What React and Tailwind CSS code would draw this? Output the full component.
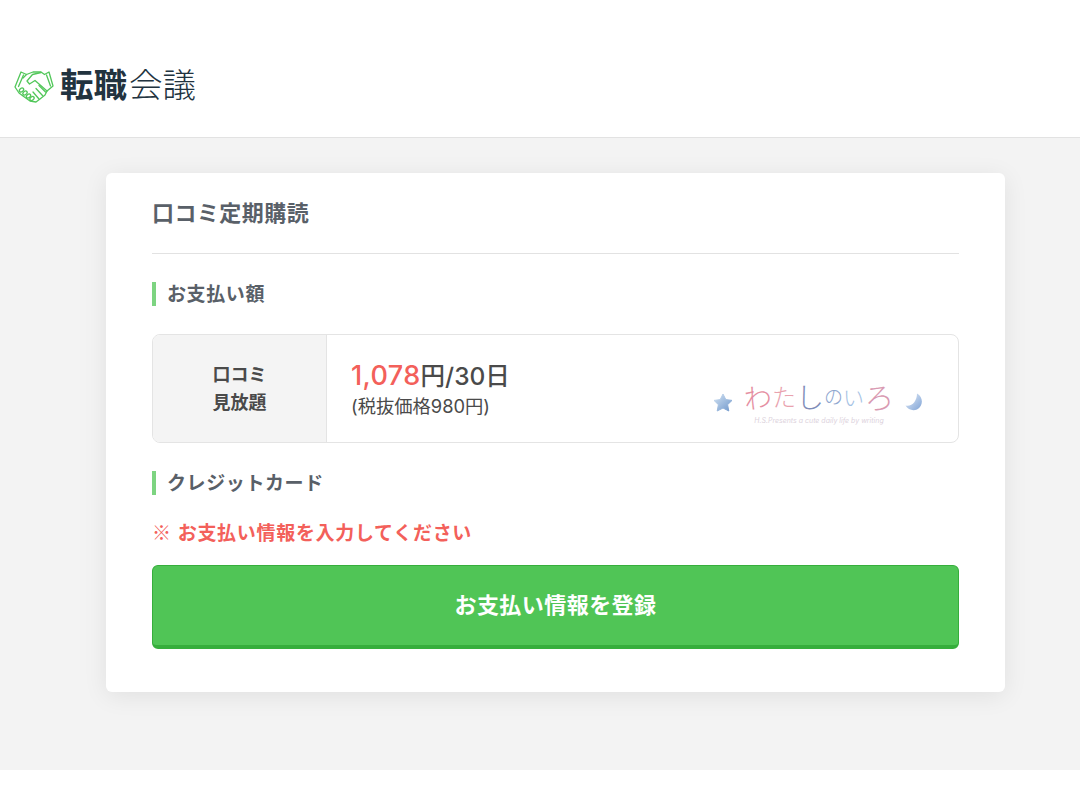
import React from 'react';

const HandshakeLogo = () => (
  <svg width="40" height="34" viewBox="0 0 40 34" fill="none" stroke="#52c75a" strokeWidth="1.3" strokeLinejoin="round" strokeLinecap="round">
    {/* outer silhouette */}
    <path d="M1 18 L7 3 L12.5 5.5 L19 3 L27 3 L30.5 5.5 L35 3 L39 17 L33 22 L31 26 L26 30 L22 33 L16 32 L9 27 L5 24 Z" />
    {/* cuffs */}
    <path d="M9.5 6 L4.5 17.5" />
    <path d="M32.5 6 L36.5 17" />
    {/* thumb and upper hand */}
    <path d="M27 3.5 L18.5 5.5 L13 12 L15.5 15 L21 11.5 L33 22" />
    <path d="M12.5 5.5 L9 9" />
    {/* fingers */}
    <path d="M25 16.5 L31.5 23" />
    <path d="M22 19.5 L28.5 26.5" />
    <path d="M19 23 L25 30" />
    {/* knuckles */}
    <ellipse cx="7.5" cy="21" rx="2.4" ry="1.7" transform="rotate(-40 7.5 21)" />
    <ellipse cx="11" cy="24" rx="2.4" ry="1.7" transform="rotate(-40 11 24)" />
    <ellipse cx="14.5" cy="27" rx="2.4" ry="1.7" transform="rotate(-40 14.5 27)" />
    <ellipse cx="18" cy="29.5" rx="2.4" ry="1.7" transform="rotate(-40 18 29.5)" />
  </svg>
);

const Star = () => (
  <svg width="20" height="19" viewBox="0 0 20 19">
    <defs>
      <linearGradient id="starFill" x1="0" y1="0" x2="1" y2="1">
        <stop offset="0" stopColor="#d3e3f3" />
        <stop offset="1" stopColor="#6f97cb" />
      </linearGradient>
    </defs>
    <path d="M10 1 L12.8 6.6 L19 7.4 L14.6 11.7 L15.8 18 L10 15 L4.2 18 L5.4 11.7 L1 7.4 L7.2 6.6 Z" fill="url(#starFill)" stroke="url(#starFill)" strokeLinejoin="round" strokeWidth="1" />
  </svg>
);

const Moon = () => (
  <svg width="18" height="18" viewBox="0 0 18 18">
    <defs>
      <linearGradient id="moonFill" x1="0" y1="0" x2="1" y2="1">
        <stop offset="0" stopColor="#e8f0f9" />
        <stop offset="1" stopColor="#7fa3d6" />
      </linearGradient>
    </defs>
    <path d="M12 0.5 C18.5 4 18.5 13 12 16.5 C8 18 3 17 0.5 12.5 C7 14 12 8 12 0.5 Z" fill="url(#moonFill)" />
  </svg>
);

const SectionHeading = ({ children }) => (
  <h3 className="h-6 border-l-4 border-[#7dd481] pl-[11px] text-[19px] leading-[26px] font-bold tracking-[0.6px] text-[#596068]">
    {children}
  </h3>
);

export default function App() {
  return (
    <div className="min-h-[810px] bg-white font-['Liberation_Sans','Noto_Sans_CJK_JP',sans-serif]">
      {/* ヘッダー */}
      <header className="flex h-[138px] items-center gap-[6px] border-b border-[#e2e2e2] bg-white pt-[34px] pl-[14px]">
        <HandshakeLogo />
        <div className="flex items-center text-[33.5px] leading-none text-[#22333f]">
          <span className="font-bold">転職</span>
          <span className="ml-[2px] font-light">会議</span>
        </div>
      </header>

      <main className="h-[632px] bg-[#f3f3f3] pt-[35px] pl-[106px]">
        <div className="h-[519px] w-[899px] rounded-md bg-white px-[46px] shadow-[0_4px_24px_rgba(0,0,0,0.08)]">
          <h2 className="flex h-[81px] items-center border-b border-[#e2e2e2] text-[22px] font-bold tracking-[0.45px] text-[#596068]">
            口コミ定期購読
          </h2>

          <div className="mt-[28px]">
            <SectionHeading>お支払い額</SectionHeading>
          </div>

          {/* 料金 */}
          <div className="mt-[28px] flex h-[109px] overflow-hidden rounded-lg border border-[#e4e4e4]">
            <div className="flex w-[174px] items-center justify-center border-r border-[#e4e4e4] bg-[#f4f4f4] text-center text-[18px] leading-[28px] font-bold text-[#4a4a4a]">
              <p>口コミ<br />見放題</p>
            </div>
            <div className="flex flex-1 items-center justify-between pr-[35px] pl-[24px] font-['Inter','Noto_Sans_CJK_JP',sans-serif]">
              <div className="text-[#4a4a4a]">
                <p className="text-[24.5px] leading-[33px] font-medium">
                  <span className="text-[27px] tracking-[0.4px] text-[#f3605a]">1,078</span>円/30日
                </p>
                <p className="text-[18.3px] leading-[26px]">(税抜価格980円)</p>
              </div>
              <div className="flex items-center gap-[9px] pt-[27px]">
                <Star />
                <div className="flex w-[154px] flex-col items-center">
                  <p className="flex h-[36px] items-center font-extralight">
                    <span className="-rotate-6 text-[28px] leading-none text-[#e58fa2]">わ</span>
                    <span className="text-[24px] leading-none text-[#e9a2ae]">た</span>
                    <span className="text-[28px] leading-none text-[#7f8db8]">し</span>
                    <span className="text-[19px] leading-none text-[#8ea6cf]">の</span>
                    <span className="text-[21px] leading-none text-[#a4c2e4]">い</span>
                    <span className="-rotate-6 text-[30px] leading-none text-[#d99ab2]">ろ</span>
                  </p>
                  <span className="text-[7px] leading-[9px] whitespace-nowrap text-[#dcd2dc] italic">
                    H.S.Presents a cute daily life by writing
                  </span>
                </div>
                <Moon />
              </div>
            </div>
          </div>

          <div className="mt-[28px]">
            <SectionHeading>クレジットカード</SectionHeading>
          </div>

          <p className="mt-[25px] text-[19px] leading-7 font-bold tracking-[0.7px] text-[#f3605a]">
            <span className="font-normal">※</span> お支払い情報を入力してください
          </p>

          <button className="mt-[17px] h-[84px] w-full rounded-md border border-[#36ae3c] border-b-4 bg-[#50c556] text-[22px] font-bold tracking-[0.45px] text-white">
            お支払い情報を登録
          </button>
        </div>
      </main>
    </div>
  );
}
